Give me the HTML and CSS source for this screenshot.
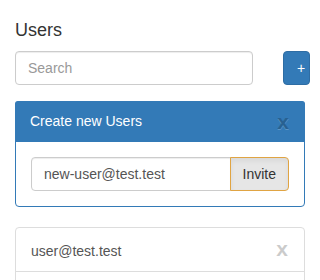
FILE: index.html
```html
<!DOCTYPE html>
<html lang="en">
<head>
    <meta charset="UTF-8">
    <meta name="viewport" content="width=device-width, initial-scale=1.0">
    <title>Users</title>
    <link rel="stylesheet" href="styles.css">
</head>
<body>

    <div class="container">
        <h4 class="page-title">Users</h4>

        <div class="search-row">
            <input type="text" class="form-control search" placeholder="Search">
            <button class="btn btn-primary add-btn">+</button>
        </div>

        <div class="panel">
            <div class="panel-heading">
                <span class="panel-title">Create new Users</span>
                <button class="close">x</button>
            </div>
            <div class="panel-body">
                <div class="input-group">
                    <input type="text" class="form-control" value="new-user@test.test">
                    <button class="btn btn-default invite">Invite</button>
                </div>
            </div>
        </div>

        <ul class="list-group">
            <li class="list-group-item">
                <span>user@test.test</span>
                <button class="close">x</button>
            </li>
            <li class="list-group-item empty"></li>
        </ul>
    </div>

</body>
</html>
```

FILE: styles.css
```css
* {
    box-sizing: border-box;
}
body {
    margin: 0;
    font-family: "Liberation Sans", Arial, sans-serif;
    font-size: 14px;
    line-height: 20px;
    color: #333;
    background: #fff;
}
.container {
    padding: 20px 15px;
}
.page-title {
    margin: 0 0 11px;
    font-size: 18px;
    font-weight: 500;
    line-height: 20px;
}
.form-control {
    display: block;
    height: 34px;
    min-width: 0;
    padding: 6px 12px;
    font-family: inherit;
    font-size: 14px;
    line-height: 20px;
    color: #555;
    background: #fff;
    border: 1px solid #ccc;
    border-radius: 4px;
    box-shadow: inset 0 1px 1px rgba(0, 0, 0, .075);
}
.form-control::placeholder {
    color: #999;
}
.btn {
    height: 34px;
    padding: 6px 12px;
    font-family: inherit;
    font-size: 14px;
    line-height: 20px;
    border: 1px solid transparent;
    border-radius: 4px;
    cursor: pointer;
}
.btn-primary {
    color: #fff;
    background: #337ab7;
    border-color: #2e6da4;
}
.search-row {
    display: flex;
    gap: 30px;
    margin-bottom: 16px;
}
.search {
    flex: 0 0 238px;
}
.add-btn {
    flex: 0 0 27px;
    padding: 6px 0 6px 13px;
    text-align: left;
}
.panel {
    border: 1px solid #337ab7;
    border-radius: 4px;
    margin-bottom: 20px;
}
.panel-heading {
    display: flex;
    justify-content: space-between;
    align-items: flex-start;
    padding: 10px 15px;
    height: 41px;
    margin: -1px -1px 0;
    background: #337ab7;
    color: #fff;
    border-radius: 3px 3px 0 0;
}
.panel-title {
    font-size: 14px;
}
.close {
    padding: 0;
    margin: 0;
    border: 0;
    background: none;
    font-family: inherit;
    font-size: 21px;
    font-weight: bold;
    line-height: 1;
    color: #000;
    opacity: .2;
    text-shadow: 0 1px 0 #fff;
    cursor: pointer;
}
.panel-heading .close {
    margin-right: 1px;
}
.panel-body {
    padding: 15px;
}
.input-group {
    display: flex;
}
.input-group .form-control {
    flex: 1 1 0;
    border-radius: 4px 0 0 4px;
}
.btn-default.invite {
    flex: 0 0 59px;
    margin-left: -1px;
    color: #333;
    background: #e6e6e6;
    border-color: #e0a443;
    border-radius: 0 4px 4px 0;
    box-shadow: inset 0 3px 5px rgba(0, 0, 0, .06);
}
.list-group {
    margin: 0;
    padding: 0;
    list-style: none;
}
.list-group-item {
    display: flex;
    justify-content: space-between;
    align-items: baseline;
    padding: 10px 15px;
    margin-bottom: -1px;
    color: #555;
    border: 1px solid #ddd;
}
.list-group-item:first-child {
    border-radius: 4px 4px 0 0;
}
.list-group-item.empty {
    height: 44px;
}
.list-group-item .close {
    margin-right: 1px;
}
```
